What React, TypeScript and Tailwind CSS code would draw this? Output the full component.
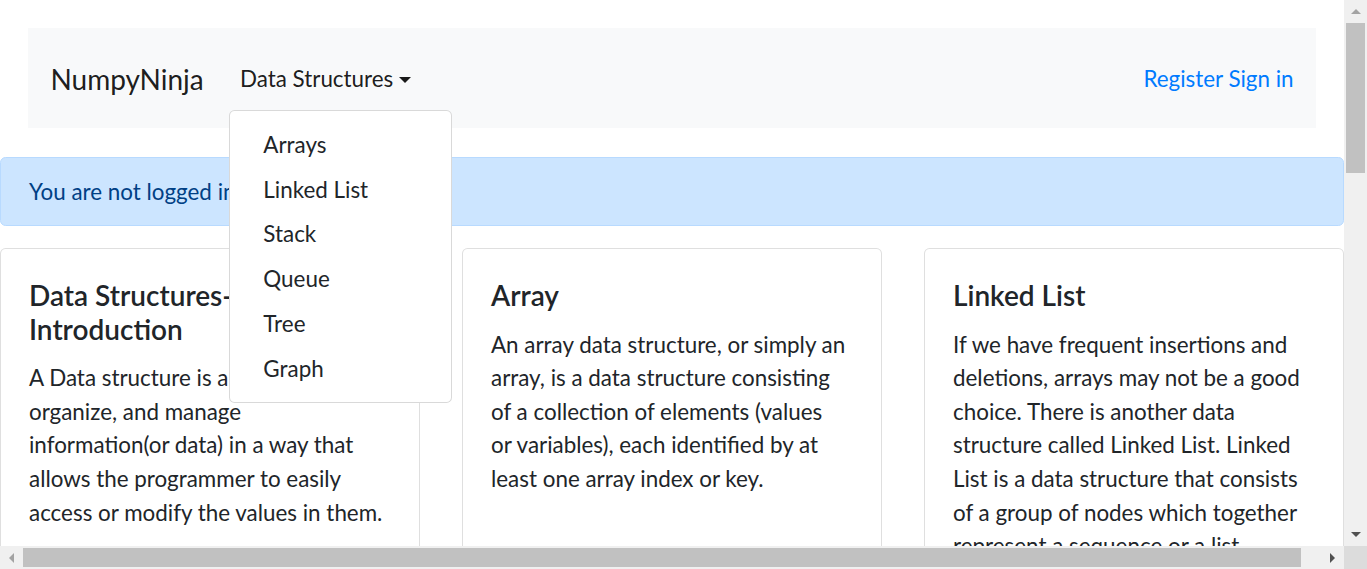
import React from 'react';

const menuItems = ['Arrays', 'Linked List', 'Stack', 'Queue', 'Tree', 'Graph'];

const cards: { title: string[]; lines: string[] }[] = [
  {
    title: ['Data Structures-', 'Introduction'],
    lines: [
      'A Data structure is a way to store,',
      'organize, and manage',
      'information(or data) in a way that',
      'allows the programmer to easily',
      'access or modify the values in them.',
    ],
  },
  {
    title: ['Array'],
    lines: [
      'An array data structure, or simply an',
      'array, is a data structure consisting',
      'of a collection of elements (values',
      'or variables), each identified by at',
      'least one array index or key.',
    ],
  },
  {
    title: ['Linked List'],
    lines: [
      'If we have frequent insertions and',
      'deletions, arrays may not be a good',
      'choice. There is another data',
      'structure called Linked List. Linked',
      'List is a data structure that consists',
      'of a group of nodes which together',
      'represent a sequence or a list.',
    ],
  },
];

const Card: React.FC<{ title: string[]; lines: string[] }> = ({ title, lines }) => (
  <div className="w-[420px] shrink-0 border border-black/[0.125] rounded-[5.6px] bg-white p-[28px] pb-[40px]">
    <h5 className="pt-[2px] text-[28px] leading-[33.6px] font-semibold text-[#212529] mb-[14.8px]">
      {title.map((t) => (
        <span key={t} className="block whitespace-nowrap">{t}</span>
      ))}
    </h5>
    <p className="text-[22.4px] leading-[33.6px] text-[#212529]">
      {lines.map((l) => (
        <span key={l} className="block whitespace-nowrap">{l}</span>
      ))}
    </p>
  </div>
);

const Tri: React.FC<{ dir: 'up' | 'down' | 'left' | 'right'; dark?: boolean }> = ({ dir, dark }) => {
  const fill = dark ? '#505050' : '#a3a3a3';
  const pts = {
    up: '0,5 5,0 10,5',
    down: '0,0 10,0 5,5',
    left: '5,0 5,10 0,5',
    right: '0,0 0,10 5,5',
  }[dir];
  const vertical = dir === 'up' || dir === 'down';
  return (
    <svg width={vertical ? 10 : 5} height={vertical ? 5 : 10} viewBox={vertical ? '0 0 10 5' : '0 0 5 10'}>
      <polygon points={pts} fill={fill} />
    </svg>
  );
};

export default function App() {
  return (
    <div className="w-[1367px] h-[569px] flex flex-col overflow-hidden bg-white font-['Lato','Noto_Sans',sans-serif] text-[#212529]">
      <div className="flex flex-1 min-h-0">
        {/* page */}
        <div className="flex-1 min-w-0 overflow-hidden">
          <div className="px-[28px] pt-[28px]">
            <nav className="h-[100px] bg-[#f8f9fa] flex items-center justify-between px-[22.4px] pt-[2px]">
              <div className="flex items-center">
                <span className="text-[28px] leading-[42px] text-black/90 mr-[25px]">NumpyNinja</span>
                <div className="relative">
                  <div className="flex items-center px-[11.2px] py-[11.2px] text-[22.4px] leading-[33.6px] text-black/90">
                    Data Structures
                    <span className="ml-[6px] mt-[1px] w-0 h-0 border-t-[6.7px] border-t-black/90 border-x-[6.7px] border-x-transparent" />
                  </div>
                  <div className="absolute left-0 top-full mt-[3px] z-10 w-[223px] bg-white border border-black/15 rounded-[5.6px] py-[11.2px]">
                    {menuItems.map((m) => (
                      <div key={m} className="px-[33.6px] py-[5.6px] text-[22.4px] leading-[33.6px] text-[#212529]">
                        {m}
                      </div>
                    ))}
                  </div>
                </div>
              </div>
              <div className="text-[22.4px] leading-[33.6px] text-[#007bff]">Register Sign in</div>
            </nav>
          </div>

          <div className="mt-[29px] bg-[#cce5ff] border border-[#b8daff] rounded-[5.6px] text-[#004085] px-[28px] py-[16.8px] text-[22.4px] leading-[33.6px]">
            You are not logged in
          </div>

          <div className="mt-[22px] flex gap-[42px]">
            {cards.map((c) => (
              <Card key={c.title[0]} title={c.title} lines={c.lines} />
            ))}
          </div>
        </div>

        {/* vertical scrollbar */}
        <div className="w-[23px] shrink-0 bg-[#f0f0f0] flex flex-col items-center">
          <div className="h-[23px] flex items-center justify-center">
            <Tri dir="up" />
          </div>
          <div className="w-[19px] h-[150px] bg-[#c1c1c1]" />
          <div className="flex-1" />
          <div className="h-[23px] flex items-center justify-center">
            <Tri dir="down" dark />
          </div>
        </div>
      </div>

      {/* horizontal scrollbar */}
      <div className="h-[23px] shrink-0 flex">
        <div className="flex-1 bg-[#f0f0f0] flex items-center">
          <div className="w-[23px] h-full flex items-center justify-center">
            <Tri dir="left" />
          </div>
          <div className="w-[1278px] h-[19px] bg-[#c1c1c1]" />
          <div className="flex-1" />
          <div className="w-[23px] h-full flex items-center justify-center">
            <Tri dir="right" dark />
          </div>
        </div>
        <div className="w-[23px] bg-[#dcdcdc]" />
      </div>
    </div>
  );
}
